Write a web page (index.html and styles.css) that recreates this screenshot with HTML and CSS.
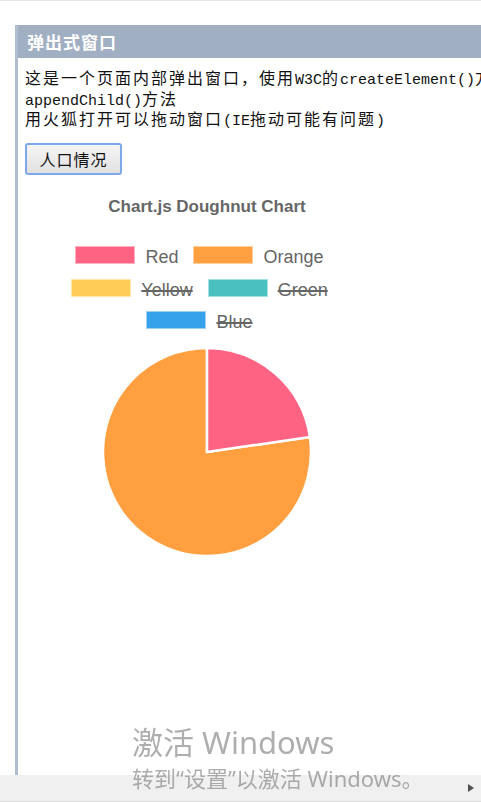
FILE: index.html
```html
<!DOCTYPE html>
<html lang="zh-CN">
<head>
<meta charset="utf-8">
<title>弹出式窗口</title>
<link rel="stylesheet" href="styles.css">
</head>
<body>
<div class="topline"></div>
<div class="popup">
  <div class="popup-title">弹出式窗口</div>
  <div class="popup-body">
    <div class="desc">
      <div class="line">这是一个页面内部弹出窗口，使用<span class="en">W3C</span>的<span class="en">createElement()</span>方法和</div>
      <div class="line"><span class="en">appendChild()</span>方法</div>
      <div class="line">用火狐打开可以拖动窗口<span class="en">(IE</span>拖动可能有问题<span class="en">)</span></div>
    </div>
    <button class="btn" type="button">人口情况</button>
    <div class="chart">
      <div class="chart-title">Chart.js Doughnut Chart</div>
      <div class="legend">
        <div class="legend-row">
          <div class="item"><span class="box red"></span><span class="label">Red</span></div>
          <div class="item"><span class="box orange"></span><span class="label">Orange</span></div>
        </div>
        <div class="legend-row">
          <div class="item"><span class="box yellow"></span><span class="label off">Yellow</span></div>
          <div class="item"><span class="box green"></span><span class="label off">Green</span></div>
        </div>
        <div class="legend-row">
          <div class="item"><span class="box blue"></span><span class="label off">Blue</span></div>
        </div>
      </div>
      <svg class="pie" width="364" height="212" viewBox="0 0 364 212">
        <path d="M182 106 L284.9 91 A104 104 0 1 1 182 2 Z" fill="#ff9f40" stroke="#fff" stroke-width="2.5" stroke-linejoin="round"/>
        <path d="M182 106 L182 2 A104 104 0 0 1 284.9 91 Z" fill="#ff6384" stroke="#fff" stroke-width="2.5" stroke-linejoin="round"/>
      </svg>
    </div>
  </div>
</div>
<div class="watermark">
  <div class="wm1">激活 Windows</div>
  <div class="wm2">转到“设置”以激活 Windows。</div>
</div>
<div class="hscroll"><span class="arrow"></span></div>
</body>
</html>
```
FILE: styles.css
```css
html, body {
  margin: 0;
  padding: 0;
  background: #fff;
  overflow: hidden;
  height: 100%;
}
.topline {
  height: 1px;
  background: #e6e6e6;
}
.popup {
  margin: 24px 0 0 15px;
  width: 640px;
  height: 820px;
  border-left: 3px solid #b1bdd0;
  box-sizing: border-box;
}
.popup-title {
  height: 33px;
  line-height: 33px;
  background: #a1afc3;
  color: #fff;
  font-family: "Noto Sans CJK SC", sans-serif;
  font-weight: bold;
  font-size: 17px;
  letter-spacing: 1px;
  padding-left: 9px;
}
.popup-body {
  padding: 9px 0 0 7px;
}
.desc {
  font-family: "Noto Sans CJK SC", sans-serif;
  font-size: 16px;
  letter-spacing: 2px;
  color: #111;
  white-space: nowrap;
}
.line {
  height: 20.5px;
  line-height: 20.5px;
  overflow: visible;
}
.en {
  font-family: "Liberation Mono", monospace;
  font-size: 15px;
  letter-spacing: 0;
  line-height: 1;
  vertical-align: baseline;
}
.btn {
  display: block;
  margin-top: 14.5px;
  width: 97px;
  height: 32px;
  padding: 0;
  border: 2px solid #7ea8e9;
  border-radius: 3px;
  background: linear-gradient(#f5f5f5, #e1e1e1);
  font-family: "Noto Sans CJK SC", sans-serif;
  font-size: 16px;
  letter-spacing: 1px;
  color: #111;
}
.chart {
  width: 364px;
  margin-left: -7px;
  padding-left: 7px;
}
.chart-title {
  margin-top: 22px;
  text-align: center;
  font-family: "Liberation Sans", Arial, sans-serif;
  font-weight: bold;
  font-size: 17px;
  line-height: 20px;
  color: #666;
}
.legend {
  margin-top: 29px;
  display: flex;
  flex-direction: column;
  gap: 14.5px;
}
.legend-row {
  display: flex;
  justify-content: center;
}
.item {
  display: flex;
  align-items: flex-start;
  margin-right: 15px;
  height: 18px;
}
.box {
  width: 60px;
  height: 18px;
  box-sizing: border-box;
  border: 1px solid rgba(255,255,255,0.5);
  margin-right: 10px;
}
.red { background: #ff6384; }
.orange { background: #ff9f40; }
.yellow { background: #ffcd56; }
.green { background: #4bc0c0; }
.blue { background: #36a2eb; }
.label {
  font-family: "Liberation Sans", Arial, sans-serif;
  font-size: 18px;
  line-height: 18px;
  margin-top: 2px;
  color: #666;
}
.label.off {
  text-decoration: line-through;
  text-decoration-thickness: 2px;
  text-decoration-color: #666;
}
.pie {
  display: block;
  margin-top: 17px;
}
.watermark {
  position: fixed;
  left: 132px;
  top: 725px;
  color: rgba(120,120,120,0.6);
  font-family: "Noto Sans", "Noto Sans CJK SC", sans-serif;
  z-index: 2;
  white-space: nowrap;
}
.wm1 {
  font-size: 31px;
  line-height: 34px;
}
.wm2 {
  margin-top: 7px;
  font-size: 22px;
  line-height: 24px;
}
.hscroll {
  position: fixed;
  left: 0;
  right: 0;
  bottom: 0;
  height: 27px;
  background: #f0f0f0;
  border-bottom: 1px solid #dadada;
  box-sizing: border-box;
  display: flex;
  align-items: center;
  justify-content: flex-end;
  padding-right: 7px;
  z-index: 1;
}
.arrow {
  width: 0;
  height: 0;
  border-top: 4.5px solid transparent;
  border-bottom: 4.5px solid transparent;
  border-left: 6px solid #505050;
}
```
